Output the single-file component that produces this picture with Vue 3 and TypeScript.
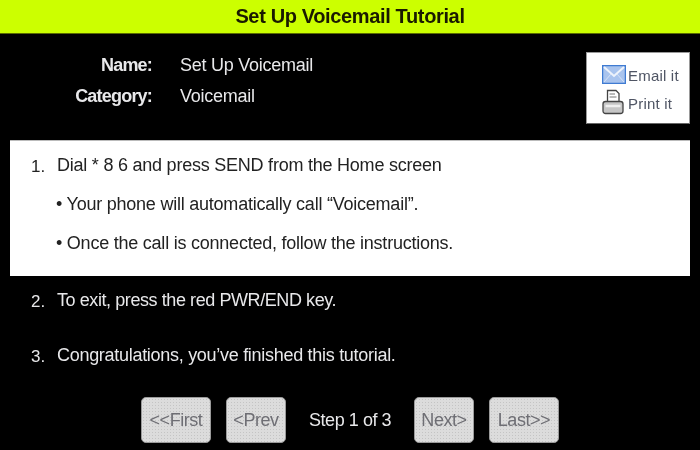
<script setup lang="ts">
const buttons = { left: ['<<First', '<Prev'], right: ['Next>', 'Last>>'] }
</script>

<template>
  <div class="page">
    <header class="title">Set Up Voicemail Tutorial</header>
    <section class="info">
      <dl class="meta">
        <div class="meta-row"><dt>Name:</dt><dd>Set Up Voicemail</dd></div>
        <div class="meta-row"><dt>Category:</dt><dd>Voicemail</dd></div>
      </dl>
      <div class="share">
        <div class="share-row">
          <svg width="24" height="19" viewBox="0 0 24 19">
            <rect x="0.5" y="0.5" width="23" height="18" fill="#a9c4ee" stroke="#3f7bd2" stroke-width="1.5" />
            <path d="M2 2 L12 11 L22 2" fill="none" stroke="#eef3fb" stroke-width="2" />
            <path d="M2 17 L9 9 M22 17 L15 9" fill="none" stroke="#d5e2f6" stroke-width="1" />
          </svg>
          <span>Email it</span>
        </div>
        <div class="share-row print">
          <svg width="22" height="26" viewBox="0 0 22 26">
            <path d="M5.5 13 V1.5 H14 L17 4.5 V13" fill="#fff" stroke="#444" stroke-width="1.3" />
            <path d="M7.5 5 H13 M7.5 8 H14.5" stroke="#777" />
            <rect x="1" y="12.5" width="20" height="12" rx="2.5" fill="#c6c6c6" stroke="#444" stroke-width="1.3" />
            <path d="M3.5 17 H18.5" stroke="#efefef" stroke-width="2.5" />
          </svg>
          <span>Print it</span>
        </div>
      </div>
    </section>
    <section class="panel">
      <div class="step"><span class="num">1.</span><span>Dial * 8 6 and press SEND from the Home screen</span></div>
      <p class="bullet">• Your phone will automatically call “Voicemail”.</p>
      <p class="bullet">• Once the call is connected, follow the instructions.</p>
    </section>
    <section class="rest">
      <div class="step tight"><span class="num">2.</span><span>To exit, press the red PWR/END key.</span></div>
      <div class="step"><span class="num">3.</span><span>Congratulations, you’ve finished this tutorial.</span></div>
    </section>
    <nav class="nav">
      <button class="btn wide" type="button">{{ buttons.left[0] }}</button>
      <button class="btn" type="button">{{ buttons.left[1] }}</button>
      <span class="count">Step 1 of 3</span>
      <button class="btn" type="button">{{ buttons.right[0] }}</button>
      <button class="btn wide" type="button">{{ buttons.right[1] }}</button>
    </nav>
  </div>
</template>

<style>
html, body { margin: 0; background: #000; }
</style>

<style scoped>
.page {
  width: 700px;
  height: 450px;
  overflow: hidden;
  background: #000;
  color: #e8e8ea;
  font-family: "Liberation Sans", Arial, sans-serif;
  font-size: 18px;
  letter-spacing: -0.29px;
  filter: blur(0.35px);
}
.title {
  height: 34px;
  border-bottom: 1px solid #5a6b00;
  box-sizing: border-box;
  background: #ccff00;
  color: #1a1a00;
  font-weight: 700;
  font-size: 20px;
  letter-spacing: -0.36px;
  line-height: 33px;
  text-align: center;
}
.info {
  display: flex;
  justify-content: space-between;
  align-items: flex-start;
  height: 106px;
  padding: 18px 10px 0 0;
  box-sizing: border-box;
}
.meta { margin: 0; }
.meta-row { display: flex; height: 31px; line-height: 26px; }
.meta dt { width: 152px; text-align: right; font-weight: 700; letter-spacing: -0.8px; }
.meta dd { margin: 0 0 0 28px; letter-spacing: -0.25px; }
.share {
  width: 104px;
  height: 72px;
  box-sizing: border-box;
  background: #fff;
  border: 1px solid #999;
  border-bottom-color: #666;
  padding: 10px 0 0 15px;
  color: #4f5564;
  font-size: 15px;
  letter-spacing: 0.2px;
}
.share-row { display: flex; align-items: center; gap: 2px; height: 22px; }
.share-row span { padding-top: 2px; }
.share-row.print { margin-top: 6px; gap: 4px; }
.panel {
  margin: 0 10px;
  height: 136px;
  box-sizing: border-box;
  background: #fff;
  color: #222;
  padding: 12px 0 0 21px;
  border-top: 1px solid #bbb;
  letter-spacing: -0.23px;
}
.step { display: flex; line-height: 24px; }
.step.tight { letter-spacing: -0.42px; }
.num { width: 26px; padding-top: 2px; margin-bottom: -2px; font-size: 17px; letter-spacing: 0; }
.bullet { margin: 15px 0 0 25px; line-height: 24px; }
.rest { padding: 12px 0 0 31px; height: 121px; box-sizing: border-box; }
.rest .step + .step { margin-top: 31px; }
.nav {
  display: flex;
  align-items: center;
  padding-left: 141px;
  height: 46px;
}
.btn {
  width: 60px;
  height: 46px;
  padding: 0;
  border: 1px solid #9a9a9a;
  border-radius: 5px;
  background-color: #dcdcdc;
  background-image: radial-gradient(circle, #c4c4c4 0.8px, transparent 1px);
  background-size: 3px 3px;
  color: #6e6e74;
  font: inherit;
  letter-spacing: -0.45px;
  margin-right: 15px;
}
.btn.wide { width: 70px; }
.count {
  width: 82px;
  margin: 0 23px 0 8px;
  white-space: nowrap;
  font-weight: 400;
  letter-spacing: -0.45px;
}
</style>
